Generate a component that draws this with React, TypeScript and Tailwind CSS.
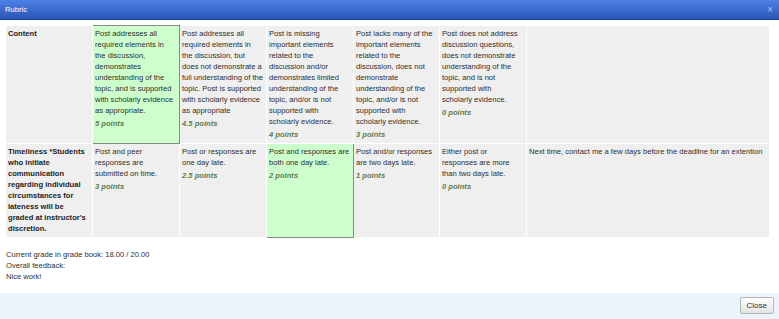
const font = { fontFamily: '"Liberation Sans", Arial, sans-serif' };

type Level = { lines: string[]; points: string; selected?: boolean };

// line breaks follow the reference wrapping
const rows: { title: string[]; levels: Level[]; comment: string }[] = [
  {
    title: ['Content'],
    levels: [
      {
        lines: [
          'Post addresses all',
          'required elements in',
          'the discussion,',
          'demonstrates',
          'understanding of the',
          'topic, and is supported',
          'with scholarly evidence',
          'as appropriate.',
        ],
        points: '5 points',
        selected: true,
      },
      {
        lines: [
          'Post addresses all',
          'required elements in',
          'the discussion, but',
          'does not demonstrate a',
          'full understanding of the',
          'topic. Post is supported',
          'with scholarly evidence',
          'as appropriate',
        ],
        points: '4.5 points',
      },
      {
        lines: [
          'Post is missing',
          'important elements',
          'related to the',
          'discussion and/or',
          'demonstrates limited',
          'understanding of the',
          'topic, and/or is not',
          'supported with',
          'scholarly evidence.',
        ],
        points: '4 points',
      },
      {
        lines: [
          'Post lacks many of the',
          'important elements',
          'related to the',
          'discussion, does not',
          'demonstrate',
          'understanding of the',
          'topic, and/or is not',
          'supported with',
          'scholarly evidence.',
        ],
        points: '3 points',
      },
      {
        lines: [
          'Post does not address',
          'discussion questions,',
          'does not demonstrate',
          'understanding of the',
          'topic, and is not',
          'supported with',
          'scholarly evidence.',
        ],
        points: '0 points',
      },
    ],
    comment: '',
  },
  {
    title: [
      'Timeliness *Students',
      'who initiate',
      'communication',
      'regarding individual',
      'circumstances for',
      'lateness will be',
      "graded at instructor's",
      'discretion.',
    ],
    levels: [
      { lines: ['Post and peer', 'responses are', 'submitted on time.'], points: '3 points' },
      { lines: ['Post or responses are', 'one day late.'], points: '2.5 points' },
      { lines: ['Post and responses are', 'both one day late.'], points: '2 points', selected: true },
      { lines: ['Post and/or responses', 'are two days late.'], points: '1 points' },
      { lines: ['Either post or', 'responses are more', 'than two days late.'], points: '0 points' },
    ],
    comment: 'Next time, contact me a few days before the deadline for an extention',
  },
];

const Lines = ({ lines }: { lines: string[] }) => (
  <>
    {lines.map((l, i) => (
      <div key={i} className="whitespace-nowrap">
        {l}
      </div>
    ))}
  </>
);

const Cell = ({ level }: { level: Level }) => (
  <td
    className={`align-top pl-[2px] pr-0 pt-[2px] pb-[3px] border ${
      level.selected ? 'bg-[#ccffcc] border-[#8a8a8a]' : 'bg-[#efefef] border-white'
    }`}>
    <Lines lines={level.lines} />
    <div className="mt-[2px] italic font-bold text-[#5f7d52]">{level.points}</div>
  </td>
);

export default function App() {
  return (
    <div className="w-[779px] h-[319px] bg-white flex flex-col text-[7.6px] leading-[11px] text-[#2e2e2e]" style={font}>
      <div className="h-[20px] flex items-center justify-between pl-[5px] pr-[6px] bg-gradient-to-b from-[#4c82e4] to-[#2b56b8] border-b border-[#23479c] text-white">
        <span>Rubric</span>
        <span className="text-[10px] text-[#a9c2f2]">×</span>
      </div>
      <div className="px-[5px] pt-[5px]">
        <table className="w-[764px] table-fixed border-collapse border border-[#e2e2e2]">
          <colgroup>
            <col className="w-[87px]" />
            <col className="w-[87px]" />
            <col className="w-[87px]" />
            <col className="w-[87px]" />
            <col className="w-[86px]" />
            <col className="w-[87px]" />
            <col className="w-[243px]" />
          </colgroup>
          <tbody>
            {rows.map((row) => (
              <tr key={row.title[0]}>
                <td className="align-top pl-[2px] pr-0 pt-[2px] pb-[3px] bg-[#efefef] border border-white font-bold text-[#1e1e1e]">
                  <Lines lines={row.title} />
                </td>
                {row.levels.map((level) => (
                  <Cell key={level.points + level.lines[0]} level={level} />
                ))}
                <td className="align-top pl-[2px] pr-0 pt-[2px] pb-[3px] bg-[#efefef] border border-white whitespace-nowrap">
                  {row.comment}
                </td>
              </tr>
            ))}
          </tbody>
        </table>
        <div className="mt-[11px] pl-px">
          <p>Current grade in grade book: 18.00 / 20.00</p>
          <p>Overall feedback:</p>
          <p>Nice work!</p>
        </div>
      </div>
      <div className="mt-auto h-[26px] bg-[#ebf3fd] flex items-center justify-end pr-[5px]">
        <button className="h-[17px] px-[6px] mb-[2px] rounded-[2px] border border-[#b4b4b4] bg-gradient-to-b from-white to-[#e4e4e4] text-[#333] text-[8px]">
          Close
        </button>
      </div>
    </div>
  );
}
